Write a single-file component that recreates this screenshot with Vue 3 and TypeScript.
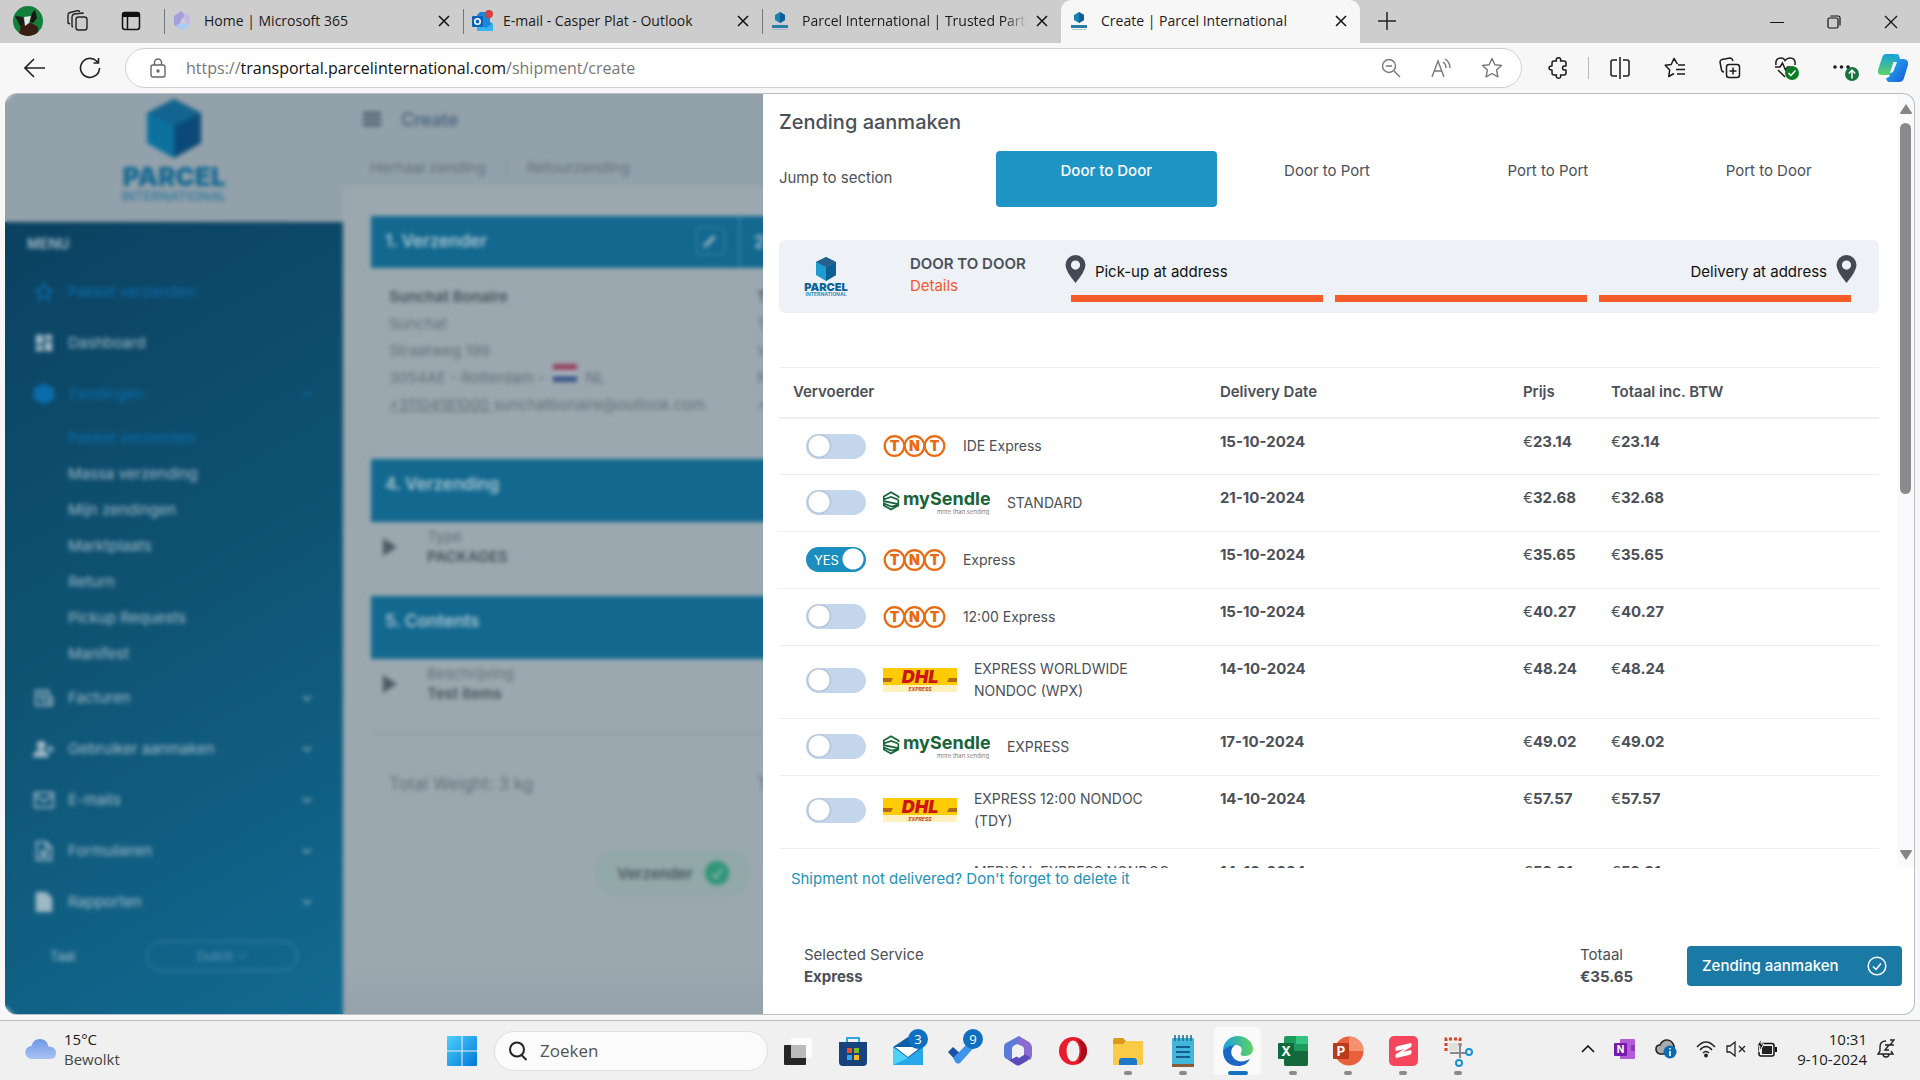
<script setup lang="ts">
import { ref } from 'vue'

interface MenuItem {
  label: string
  icon: string
  active?: boolean
  chevron?: boolean
  children?: { label: string; active?: boolean }[]
}

interface Service {
  id: number
  carrier: 'tnt' | 'sendle' | 'dhl'
  name: string
  date: string
  price: string
  total: string
}

const icons: Record<string, string> = {
  star: 'M12 3l2.7 5.8 6.3.8-4.6 4.3 1.2 6.2L12 17l-5.6 3.1 1.2-6.2L3 9.6l6.3-.8z',
  grid: 'M3 3h8v10H3zM13 3h8v6h-8zM3 15h8v6H3zM13 11h8v10h-8z',
  box: 'M12 2l10 4v11l-10 5L2 17V6z',
  invoice: 'M3 4h14v16H3zM17 11h4v9h-4M6 8h8M6 12h8M9 16h5',
  userAdd: 'M9 4a4 4 0 1 1 0 8a4 4 0 0 1 0-8zM1 20c0-8 15-8 15 0zM19 8v8M15 12h8',
  mail: 'M2 4h20v16H2zM2 6l10 8 10-8',
  doc: 'M4 2h10l6 6v14H4zM14 2v6h6M8 12h8M8 15h8M8 18h8',
  report: 'M4 2h10l6 6v14H4z',
}
const solid = ['grid', 'box', 'userAdd', 'report']

const menu: MenuItem[] = [
  { label: 'Pakket verzenden', icon: 'star', active: true },
  { label: 'Dashboard', icon: 'grid' },
  {
    label: 'Zendingen',
    icon: 'box',
    active: true,
    chevron: true,
    children: [
      { label: 'Pakket verzenden', active: true },
      { label: 'Massa verzending' },
      { label: 'Mijn zendingen' },
      { label: 'Marktplaats' },
      { label: 'Return' },
      { label: 'Pickup Requests' },
      { label: 'Manifest' },
    ],
  },
  { label: 'Facturen', icon: 'invoice', chevron: true },
  { label: 'Gebruiker aanmaken', icon: 'userAdd', chevron: true },
  { label: 'E-mails', icon: 'mail', chevron: true },
  { label: 'Formulieren', icon: 'doc', chevron: true },
  { label: 'Rapporten', icon: 'report', chevron: true },
]

const sections = ['Door to Door', 'Door to Port', 'Port to Port', 'Port to Door']
const section = ref('Door to Door')

const services: Service[] = [
  { id: 1, carrier: 'tnt', name: 'IDE Express', date: '15-10-2024', price: '23.14', total: '23.14' },
  { id: 2, carrier: 'sendle', name: 'STANDARD', date: '21-10-2024', price: '32.68', total: '32.68' },
  { id: 3, carrier: 'tnt', name: 'Express', date: '15-10-2024', price: '35.65', total: '35.65' },
  { id: 4, carrier: 'tnt', name: '12:00 Express', date: '15-10-2024', price: '40.27', total: '40.27' },
  { id: 5, carrier: 'dhl', name: 'EXPRESS WORLDWIDE NONDOC (WPX)', date: '14-10-2024', price: '48.24', total: '48.24' },
  { id: 6, carrier: 'sendle', name: 'EXPRESS', date: '17-10-2024', price: '49.02', total: '49.02' },
  { id: 7, carrier: 'dhl', name: 'EXPRESS 12:00 NONDOC (TDY)', date: '14-10-2024', price: '57.57', total: '57.57' },
  { id: 8, carrier: 'dhl', name: 'MEDICAL EXPRESS NONDOC', date: '14-10-2024', price: '59.91', total: '59.91' },
]
const selected = ref(3)
</script>

<template>
  <div class="desktop">
    <header class="tabstrip">
      <div class="strip-tools">
        <button class="plain" aria-label="Profile">
          <svg width="30" height="30" viewBox="0 0 30 30"><defs><clipPath id="av"><circle cx="15" cy="15" r="15" /></clipPath></defs><g clip-path="url(#av)"><rect width="30" height="30" fill="#12803a" /><path d="M8 18l10-1 7 4v9H6z" fill="#3b1c12" /><path d="M2 10l8 1 2 7-5 2z" fill="#1b1b18" /><path d="M11 11l7-1-2 7-4 3z" fill="#e5e6e1" /><path d="M19 7l3-3 2 8-4 5-3-1z" fill="#181512" /></g></svg>
        </button>
        <button class="plain" aria-label="Workspaces">
          <svg width="22" height="22" viewBox="0 0 22 22" fill="none" stroke="#222" stroke-width="1.4" stroke-linejoin="round"><rect x="9" y="7" width="11" height="13" rx="2.500" /><path d="M6 17l-1-.5V7q0-2 2-3l9-1v1M3 14l-2-1 0-8q0-2 2-2.500l8-2 2 1" /></svg>
        </button>
        <button class="plain" aria-label="Tab actions">
          <svg width="20" height="20" viewBox="0 0 20 20"><rect x="1.500" y="1.500" width="17" height="17" rx="2.500" fill="none" stroke="#111" stroke-width="1.500" /><path d="M1 3.500q0-2.500 2.500-2.500h13q2.500 0 2.500 2.500V6H1z" fill="#111" /><path d="M6.500 6v12" stroke="#111" stroke-width="1.500" /></svg>
        </button>
      </div>
      <div class="tab">
        <svg width="18" height="20" viewBox="0 0 18 20"><path d="M8 0L1 5v9l5 3 2-8 5-5z" fill="#a3a0dc" /><path d="M10 1l7 4v9l-5-2V7z" fill="#c8b8ea" /><path d="M3 14l6-2 8 2-8 6z" fill="#a8cdf2" /></svg>
        <span class="tab-title">Home | Microsoft 365</span>
        <button class="plain x" aria-label="Close tab"><svg width="12" height="12" viewBox="0 0 12 12"><path d="M1 1l10 10M11 1L1 11" stroke="#111" stroke-width="1.500" /></svg></button>
      </div>
      <div class="tab">
        <svg class="wide-ico" width="22" height="22" viewBox="0 0 22 22"><path d="M8 2h10v10l3 2v7H5V5z" fill="#1c87d8" /><path d="M5 13l9 5 7-5v8H5z" fill="#35b5f0" /><rect x="0" y="6" width="11" height="11" rx="1" fill="#0a62b8" /><circle cx="5.500" cy="11.500" r="2.700" fill="none" stroke="#fff" stroke-width="1.600" /><circle cx="17" cy="4" r="4" fill="#d83f3f" /></svg>
        <span class="tab-title">E-mail - Casper Plat - Outlook</span>
        <button class="plain x" aria-label="Close tab"><svg width="12" height="12" viewBox="0 0 12 12"><path d="M1 1l10 10M11 1L1 11" stroke="#111" stroke-width="1.500" /></svg></button>
      </div>
      <div class="tab">
        <svg width="18" height="20" viewBox="0 0 18 20"><path d="M9 1l5 3v5l-5 3-5-3V4z" fill="#1583b3" /><path d="M9 1l5 3v5l-5 3z" fill="#0b5f93" /><rect x="1" y="14" width="16" height="3" fill="#2a7ea6" /><rect x="2" y="18" width="14" height="1" fill="#9fb9c6" /></svg>
        <span class="tab-title fade">Parcel International | Trusted Partner</span>
        <button class="plain x" aria-label="Close tab"><svg width="12" height="12" viewBox="0 0 12 12"><path d="M1 1l10 10M11 1L1 11" stroke="#111" stroke-width="1.500" /></svg></button>
      </div>
      <div class="tab current">
        <svg width="18" height="20" viewBox="0 0 18 20"><path d="M9 1l5 3v5l-5 3-5-3V4z" fill="#1583b3" /><path d="M9 1l5 3v5l-5 3z" fill="#0b5f93" /><rect x="1" y="14" width="16" height="3" fill="#2a7ea6" /><rect x="2" y="18" width="14" height="1" fill="#b5cbd6" /></svg>
        <span class="tab-title">Create | Parcel International</span>
        <button class="plain x" aria-label="Close tab"><svg width="12" height="12" viewBox="0 0 12 12"><path d="M1 1l10 10M11 1L1 11" stroke="#111" stroke-width="1.500" /></svg></button>
      </div>
      <button class="plain new-tab" aria-label="New tab"><svg width="18" height="18" viewBox="0 0 18 18"><path d="M9 0v18M0 9h18" stroke="#222" stroke-width="1.500" /></svg></button>
      <div class="win-controls">
        <button class="plain" aria-label="Minimize"><svg width="14" height="14" viewBox="0 0 14 14"><path d="M0 7.500h14" stroke="#111" /></svg></button>
        <button class="plain" aria-label="Restore"><svg width="14" height="14" viewBox="0 0 14 14" fill="none" stroke="#111" stroke-width="1.200"><rect x="1" y="3" width="10" height="10" rx="1.500" /><path d="M3.500 1h7.500q2 0 2 2v7.500" /></svg></button>
        <button class="plain" aria-label="Close"><svg width="14" height="14" viewBox="0 0 14 14"><path d="M1 1l12 12M13 1L1 13" stroke="#111" stroke-width="1.200" /></svg></button>
      </div>
    </header>

    <nav class="toolbar">
      <button class="plain back" aria-label="Back"><svg width="22" height="20" viewBox="0 0 22 20" fill="none" stroke="#222" stroke-width="1.600"><path d="M21 10H2M10 1l-9 9 9 9" /></svg></button>
      <button class="plain reload" aria-label="Reload"><svg width="22" height="22" viewBox="0 0 22 22" fill="none" stroke="#222" stroke-width="1.600"><path d="M20.500 11a9.500 9.500 0 1 1-3-7L19 5.500M19.500 1v5h-5" /></svg></button>
      <div class="address">
        <svg width="16" height="20" viewBox="0 0 16 20" fill="none" stroke="#666" stroke-width="1.400"><rect x="1" y="7" width="14" height="12" rx="2" /><path d="M4.500 7V4.500a3.500 3.500 0 0 1 7 0V7" /><circle cx="8" cy="13" r="1" fill="#666" /></svg>
        <span class="url">https://<b>transportal.parcelinternational.com</b>/shipment/create</span>
        <button class="plain" aria-label="Zoom"><svg width="20" height="20" viewBox="0 0 20 20" fill="none" stroke="#777" stroke-width="1.400"><circle cx="8" cy="8" r="6.500" /><path d="M13 13l6 6M5 8h6" /></svg></button>
        <button class="plain" aria-label="Read aloud"><svg width="20" height="20" viewBox="0 0 20 20" fill="none" stroke="#777" stroke-width="1.400"><path d="M1 19L7 3l6 16M3 13h8M12 4q3 2 3 6M14 1q5 3 5 9" /></svg></button>
        <button class="plain" aria-label="Favorite"><svg width="22" height="22" viewBox="0 0 22 22" fill="none" stroke="#777" stroke-width="1.400" stroke-linejoin="round"><path d="M11 1.500l2.900 6.200 6.600.8-4.900 4.600 1.300 6.700L11 16.500l-5.900 3.300 1.300-6.700L1.500 8.500l6.600-.8z" /></svg></button>
      </div>
      <div class="ext">
        <button class="plain" aria-label="Extensions"><svg width="20" height="22" viewBox="0 0 20 22" fill="none" stroke="#1b1b1b" stroke-width="1.500" stroke-linejoin="round"><path d="M6 4h2.500Q7.500.8 10.500.8T12.500 4H16q2 0 2 2v3q-3.500-.5-3.500 2t3.500 2v3q0 2-2 2h-3.500q1 3.200-2 3.200T8.500 18H6q-2 0-2-2v-3Q1 13 1 11t3-2V6q0-2 2-2z" /></svg></button>
        <i class="bar"></i>
        <button class="plain" aria-label="Split screen"><svg width="22" height="22" viewBox="0 0 22 22" fill="none" stroke="#1b1b1b" stroke-width="1.500"><path d="M8 3H4Q2 3 2 5v12q0 2 2 2h4M14 3h4q2 0 2 2v12q0 2-2 2h-4M11 0v22" /></svg></button>
        <button class="plain" aria-label="Favorites"><svg width="22" height="22" viewBox="0 0 22 22" fill="none" stroke="#1b1b1b" stroke-width="1.500" stroke-linejoin="round"><path d="M13.500 7.200L10 1.500 7.200 7.500l-6 .8L5.700 13l-1 6.500L10 16.500M14 8h7M12 12.500h9M13 17h8" /></svg></button>
        <button class="plain" aria-label="Collections"><svg width="22" height="22" viewBox="0 0 22 22" fill="none" stroke="#1b1b1b" stroke-width="1.500"><rect x="7.500" y="7.500" width="13" height="13" rx="2.500" /><path d="M14 10.500v7M10.500 14h7M5 15q-2 0-2.500-2L1 5q0-2 2-2.500L11 1q2 0 3 3" /></svg></button>
        <button class="plain" aria-label="Browser essentials"><svg width="26" height="24" viewBox="0 0 26 24" fill="none" stroke="#1b1b1b" stroke-width="1.500"><path d="M2 9Q1 2 7 2q3 0 4 2.500Q13 2 16 2q6 0 5 7M1 11h5l2.500-4 3 7 2-3h3M4 14l7 7" /><circle cx="18" cy="17" r="7" fill="#0f7a24" stroke="none" /><path d="M14.500 17l2.500 2.500 4.500-5" stroke="#fff" /></svg></button>
        <button class="plain" aria-label="More"><svg width="26" height="26" viewBox="0 0 26 26"><g fill="#1b1b1b"><circle cx="2" cy="12" r="1.800" /><circle cx="8.500" cy="12" r="1.800" /><circle cx="15" cy="12" r="1.800" /></g><circle cx="19" cy="19" r="7" fill="#17733b" /><path d="M19 23.500v-8M15.800 18.500L19 15l3.200 3.500" stroke="#fff" stroke-width="1.500" fill="none" /></svg></button>
        <button class="plain copilot" aria-label="Copilot"><svg width="30" height="30" viewBox="0 0 30 30"><defs><linearGradient id="cp1" x1="0" y1="0" x2="0" y2="1"><stop offset="0" stop-color="#14a0d8" /><stop offset="1" stop-color="#5ed36b" /></linearGradient><linearGradient id="cp2" x1="0" y1="0" x2="1" y2="1"><stop offset="0" stop-color="#2bc6f2" /><stop offset="1" stop-color="#1552d8" /></linearGradient></defs><path d="M8 1h10q3 0 3 4l-5 14q-1 3-4 3H4q-5 0-4-5L4 5q1-4 4-4z" fill="url(#cp1)" /><path d="M15 1h4q2 0 3 5h4q5 1 4 6l-4 13q-1 4-5 4H11q-2 0-3-4 3 0 4-3l4-13q1-3 4-3z" fill="url(#cp2)" /><path d="M12 20l3.500-11H19l-3.500 9q-1 2-3.500 2z" fill="#fff" /></svg></button>
      </div>
    </nav>

    <div class="viewport">
      <div class="frame">
        <div class="portal">
          <aside class="sidebar">
            <div class="brand">
              <svg width="110" height="108" viewBox="0 0 110 108"><path d="M55 1l27 14v30L55 60 28 45V15z" fill="#0d6e9c" /><path d="M55 1l27 14v30L55 60z" fill="#0b4a78" /><path d="M55 1l27 14-27 13-27-13z" fill="#13648f" /><path d="M55 28v32L28 45V15z" fill="#0b719f" /><text x="55" y="88" text-anchor="middle" font-family="Inter, sans-serif" font-weight="900" font-size="26" fill="#176a92">PARCEL</text><text x="55" y="103" text-anchor="middle" font-family="Inter, sans-serif" font-weight="600" font-size="13" fill="#3c7f9f">INTERNATIONAL</text></svg>
            </div>
            <div class="menu">
              <div class="menu-title">MENU</div>
              <template v-for="item in menu" :key="item.label">
                <a href="#" class="menu-item" :class="{ active: item.active }">
                  <svg width="22" height="22" viewBox="0 0 24 24" stroke="currentColor" :fill="solid.includes(item.icon) ? 'currentColor' : 'none'"><path :d="icons[item.icon]" :stroke-width="item.icon === 'grid' ? 0 : 2" /></svg>
                  <span>{{ item.label }}</span>
                  <svg v-if="item.chevron" class="chev" width="10" height="6" viewBox="0 0 10 6" fill="none" stroke="currentColor" stroke-width="1.400"><path :d="item.children ? 'M1 5l4-4 4 4' : 'M1 1l4 4 4-4'" /></svg>
                </a>
                <div v-if="item.children" class="submenu">
                  <a v-for="child in item.children" :key="child.label" href="#" :class="{ active: child.active }">{{ child.label }}</a>
                </div>
              </template>
              <div class="lang">
                <label for="lang">Taal</label>
                <div class="lang-box">
                  <select id="lang"><option>Dutch</option></select>
                  <svg width="8" height="5" viewBox="0 0 8 5" fill="none" stroke="#5d96b4"><path d="M0 0l4 4 4-4" /></svg>
                </div>
              </div>
            </div>
          </aside>
          <main class="content">
            <div class="topbar">
              <div class="crumb">
                <svg width="18" height="14" viewBox="0 0 18 14"><path d="M0 1.500h18M0 7h18M0 12.500h18" stroke="#3b4957" stroke-width="2.600" /></svg>
                <h1>Create</h1>
              </div>
              <div class="links"><a href="#">Herhaal zending</a><i></i><a href="#">Retourzending</a></div>
            </div>
            <section class="card">
              <div class="cols head">
                <h2>1. Verzender <button class="edit" aria-label="Edit"><svg width="16" height="16" viewBox="0 0 16 16"><path d="M1 15l1-4 9-9 3 3-9 9z" fill="#86a9ba" /></svg></button></h2>
                <h2>2</h2>
              </div>
              <div class="cols addr">
                <address>
                  <b>Sunchat Bonaire</b>
                  <span>Sunchat</span>
                  <span>Straatweg 199</span>
                  <span class="city">3054AE - Rotterdam - <svg width="24" height="18" viewBox="0 0 24 18"><rect width="24" height="6" fill="#95405c" /><rect y="6" width="24" height="6" fill="#aab6bf" /><rect y="12" width="24" height="6" fill="#3a5588" /></svg> NL</span>
                  <span><a href="#">+31104181000 </a>sunchatbonaire@outlook.com</span>
                </address>
                <address><b>T</b><span>T</span><span>V</span><span>N</span><span>+</span></address>
              </div>
            </section>
            <section class="card">
              <div class="head tall"><h2>4. Verzending</h2></div>
              <div class="fold"><svg width="14" height="18" viewBox="0 0 14 18"><path d="M0 0l14 9-14 9z" fill="#4f5b64" /></svg><p>Type<b>PACKAGES</b></p></div>
            </section>
            <section class="card">
              <div class="head tall"><h2>5. Contents</h2></div>
              <div class="fold"><svg width="14" height="18" viewBox="0 0 14 18"><path d="M0 0l14 9-14 9z" fill="#4f5b64" /></svg><p>Beschrijving<b>Test items</b></p></div>
            </section>
            <div class="totals cols"><span>Total Weight: 3 kg</span><span>T</span></div>
            <div class="step"><b>Verzender</b><svg width="24" height="24" viewBox="0 0 24 24"><circle cx="12" cy="12" r="12" fill="#2f9576" /><path d="M7 13l4 4 6-10" stroke="#8fb9ae" stroke-width="2" fill="none" /></svg></div>
          </main>
        </div>
        <div class="veil"></div>

        <div class="panel" role="dialog" aria-label="Zending aanmaken">
          <div class="panel-main">
            <div class="scroller">
              <h3>Zending aanmaken</h3>
              <div class="jump">
                <span>Jump to section</span>
                <button v-for="s in sections" :key="s" :class="{ on: s === section }" @click="section = s">{{ s }}</button>
              </div>
              <div class="banner">
                <svg class="banner-logo" width="46" height="40" viewBox="0 0 46 40"><path d="M23 0l10 5v13l-10 6-10-6V5z" fill="#1e9bcf" /><path d="M23 10l10-5v13l-10 6z" fill="#0c5f95" /><path d="M23 0l10 5-10 5-10-5z" fill="#27608f" /><text x="23" y="34" text-anchor="middle" font-family="Inter, sans-serif" font-weight="900" font-size="11" fill="#0c659b">PARCEL</text><text x="23" y="39" text-anchor="middle" font-family="Inter, sans-serif" font-weight="700" font-size="5" fill="#2d8fbd">INTERNATIONAL</text></svg>
                <p class="kind"><b>DOOR TO DOOR</b><a href="#">Details</a></p>
                <div class="route">
                  <div class="ends">
                    <svg width="21" height="28" viewBox="0 0 21 28"><path d="M10.500 0A10 10 0 0 0 .5 10q0 6 10 18 10-12 10-18a10 10 0 0 0-10-10zm0 5.500a4.600 4.600 0 1 1 0 9.200a4.600 4.600 0 0 1 0-9.200z" fill="#434a54" /></svg>
                    <span>Pick-up at address</span>
                    <span class="to">Delivery at address</span>
                    <svg width="21" height="28" viewBox="0 0 21 28"><path d="M10.500 0A10 10 0 0 0 .5 10q0 6 10 18 10-12 10-18a10 10 0 0 0-10-10zm0 5.500a4.600 4.600 0 1 1 0 9.200a4.600 4.600 0 0 1 0-9.200z" fill="#434a54" /></svg>
                  </div>
                  <div class="bars"><i></i><i></i><i></i></div>
                </div>
              </div>
              <table>
                <colgroup><col class="c1" /><col class="c2" /><col class="c3" /><col /></colgroup>
                <thead><tr><th>Vervoerder</th><th>Delivery Date</th><th>Prijs</th><th>Totaal inc. BTW</th></tr></thead>
                <tbody>
                  <tr v-for="s in services" :key="s.id">
                    <td>
                      <div class="svc" :class="s.carrier">
                        <label class="switch">
                          <input type="checkbox" :checked="s.id === selected" :aria-label="s.name" @change="selected = s.id" />
                          <span v-if="s.id === selected">YES</span>
                        </label>
                        <svg v-if="s.carrier === 'tnt'" width="63" height="22" viewBox="0 0 63 22"><g fill="#fff" stroke="#ea6a10" stroke-width="2.200"><circle cx="11.500" cy="11" r="9.800" /><circle cx="51.500" cy="11" r="9.800" /><circle cx="31.500" cy="11" r="9.800" /></g><g font-family="Inter, sans-serif" font-weight="900" font-size="14" fill="#ea6a10" text-anchor="middle"><text x="11.500" y="16">T</text><text x="31.500" y="16">N</text><text x="51.500" y="16">T</text></g></svg>
                        <svg v-else-if="s.carrier === 'sendle'" width="107" height="24" viewBox="0 0 107 24"><path d="M15.500 7V5.500L8 1.200.8 5.500v4.700l14.500 3M.8 8.500L8 6l7.500 2.800M15.300 9v5.500L8 18.500.8 14.500V12.500l7.700 3 6.500-1.500" fill="none" stroke="#17633a" stroke-width="1.700" /><text x="20" y="14" font-family="Inter, sans-serif" font-weight="700" font-size="18" fill="#17633a">mySendle</text><text x="54" y="23" font-family="Inter, sans-serif" font-weight="300" font-size="6" fill="#555">more than sending</text></svg>
                        <svg v-else width="74" height="24" viewBox="0 0 74 24"><rect width="74" height="17" fill="#fecb05" /><path d="M0 10h10l-2 4H0zM66 10h8v4H64z" fill="#b36a12" /><rect y="17" width="74" height="7" fill="#fff0c0" /><text x="37" y="15" text-anchor="middle" font-family="Inter, sans-serif" font-weight="900" font-style="italic" font-size="18" fill="#cf1414">DHL</text><text x="37" y="23" text-anchor="middle" font-family="Inter, sans-serif" font-weight="700" font-style="italic" font-size="5" fill="#b8432c">EXPRESS</text></svg>
                        <span class="name">{{ s.name }}</span>
                      </div>
                    </td>
                    <td><b>{{ s.date }}</b></td>
                    <td>€<b>{{ s.price }}</b></td>
                    <td>€<b>{{ s.total }}</b></td>
                  </tr>
                </tbody>
              </table>
            </div>
            <div class="scrollbar">
              <svg width="12" height="10" viewBox="0 0 12 10"><path d="M6 0l6 9q0 1-1 1H1q-1 0-1-1z" fill="#868686" /></svg>
              <div class="track"><div class="thumb"></div></div>
              <svg width="12" height="10" viewBox="0 0 12 10"><path d="M6 10l6-9q0-1-1-1H1Q0 0 0 1z" fill="#868686" /></svg>
            </div>
          </div>
          <footer class="panel-foot">
            <a href="#" class="note">Shipment not delivered? Don't forget to delete it</a>
            <div class="summary">
              <p>Selected Service<b>Express</b></p>
              <p class="sum">Totaal<b>€35.65</b></p>
              <button class="submit">Zending aanmaken<svg width="20" height="20" viewBox="0 0 20 20" fill="none" stroke="#fff" stroke-width="1.500"><circle cx="10" cy="10" r="8.800" /><path d="M6 10.500l3 3 5-6" /></svg></button>
            </div>
          </footer>
        </div>
      </div>
    </div>

    <footer class="taskbar">
      <div class="weather">
        <svg width="31" height="20" viewBox="0 0 31 20"><defs><linearGradient id="cl" x1="0" y1="0" x2="0" y2="1"><stop offset="0" stop-color="#6d97e4" /><stop offset="1" stop-color="#a9c2f2" /></linearGradient></defs><path d="M7 20a6.500 6.500 0 0 1-.5-13Q8 0 15 0t8.500 7.500Q31 8 31 14q0 6-6 6z" fill="url(#cl)" /></svg>
        <p>15°C<span>Bewolkt</span></p>
      </div>
      <div class="dock">
        <button class="plain start" aria-label="Start"><svg width="30" height="30" viewBox="0 0 30 30"><defs><linearGradient id="wn" x1="0" y1="0" x2="1" y2="1"><stop offset="0" stop-color="#4fd0fb" /><stop offset="1" stop-color="#0078d8" /></linearGradient></defs><path d="M1 0h13.500v14.500H0V1q0-1 1-1zM15.500 0H29q1 0 1 1v13.500H15.500zM0 15.500h14.500V30H1q-1 0-1-1zM15.500 15.500H30V29q0 1-1 1H15.500z" fill="url(#wn)" /></svg></button>
        <label class="search"><svg width="20" height="20" viewBox="0 0 20 20" fill="none" stroke="#222" stroke-width="2"><circle cx="9" cy="8.500" r="7" /><path d="M13.500 14l5 5" /></svg><input type="text" placeholder="Zoeken" aria-label="Zoeken" /></label>
        <button class="app" aria-label="Task view"><svg width="32" height="32" viewBox="0 0 32 32"><rect x="2" y="10" width="22" height="20" rx="1" fill="#262626" /><path d="M9 3h21v20H9z" fill="#fff" opacity=".8" /><path d="M9 10h15v13H9z" fill="#bbb" /></svg></button>
        <button class="app" aria-label="Store"><svg width="32" height="32" viewBox="0 0 32 32"><path d="M10 8V3h12v5" fill="none" stroke="#2aa9e6" stroke-width="2" /><path d="M2 7h28v20q0 4-4 4H6q-4 0-4-4z" fill="#17427c" /><path d="M10 13h5v5h-5z" fill="#e9512a" /><path d="M17 13h5v5h-5z" fill="#7cba2c" /><path d="M10 20h5v5h-5z" fill="#2ea8ea" /><path d="M17 20h5v5h-5z" fill="#f8bb1c" /></svg></button>
        <button class="app" aria-label="Mail"><svg width="32" height="32" viewBox="0 0 32 32"><path d="M1 12L16 2l15 10v18H1z" fill="#0d5fa8" /><path d="M3 12h26l-13 10z" fill="#fff" /><path d="M1 12l15 11 15-11v17q0 1-1 1H2q-1 0-1-1z" fill="#28a8ea" /><path d="M1 12l15 11-15 7z" fill="#4fd0f5" /></svg><em>3</em></button>
        <button class="app" aria-label="To Do"><svg width="32" height="32" viewBox="0 0 32 32"><path d="M1 17l5-5 10 9-5 7z" fill="#1b51a6" /><path d="M6 23L26 3l5 5-18 20q-2 1-4 0z" fill="#3d94ea" /></svg><em>9</em></button>
        <button class="app" aria-label="Microsoft 365"><svg width="32" height="32" viewBox="0 0 32 32"><path d="M17 1L4 8q-2 1-2 4v8q0 3 3 4l5 1V14q0-3 3-4l6-3z" fill="#5b79d8" /><path d="M17 1l10 6q3 2 3 5v8q0 3-2 5l-6-4v-7q0-2-2-3l-5-2z" fill="#8a6bd0" /><path d="M5 24q4 1 7-1l8-5 8 4q0 2-3 4l-7 4q-2 1-4 0z" fill="#5a4bb8" /><path d="M12 14l5-3 5 3v6l-5 3-5-3z" fill="#f0f0f0" /></svg></button>
        <button class="app" aria-label="Opera"><svg width="32" height="32" viewBox="0 0 32 32"><circle cx="16" cy="16" r="14" fill="#e81c2e" /><path d="M20 4q10 3 10 12T20 28q4-4 4-12T20 4z" fill="#a80d1c" /><ellipse cx="16" cy="16" rx="6.500" ry="10.500" fill="#f0f0f0" /></svg></button>
        <button class="app run" aria-label="Explorer"><svg width="32" height="32" viewBox="0 0 32 32"><path d="M1 5q0-2 2-2h8l3 3h15q2 0 2 2v8H1z" fill="#d99a1c" /><path d="M1 10q0-1 1-1h9l3-3h15q2 0 2 2v20q0 2-2 2H1z" fill="#fccb45" /><path d="M7 30v-4q0-3 3-3h12q3 0 3 3v4z" fill="#1d78c8" /></svg></button>
        <button class="app run" aria-label="Notepad"><svg width="32" height="32" viewBox="0 0 32 32"><rect x="5" y="3" width="22" height="26" rx="1" fill="#42b6da" /><path d="M8 0v6M12 0v6M16 0v6M20 0v6M24 0v6" stroke="#1c6a8c" stroke-width="1.500" /><path d="M9 12h14M9 17h14M9 22h14" stroke="#155d86" stroke-width="2" /><path d="M5 29h22v3H5z" fill="#865c3a" /></svg></button>
        <button class="app run here" aria-label="Edge"><svg width="32" height="32" viewBox="0 0 32 32"><defs><linearGradient id="eg" x1="0" y1="0" x2="1" y2="0"><stop offset="0" stop-color="#1a9fe0" /><stop offset="1" stop-color="#5fd35e" /></linearGradient></defs><path d="M1 16C1 7 8 1 16 1s15 6 15 13c0 4-3 7-8 7-4 0-5-1-4-3 2-4 0-8-5-8-6 0-11 4-13 6z" fill="url(#eg)" /><path d="M1 16c2-3 7-6 12-6-4 3-5 8-2 12 3 5 10 6 17 2-3 5-7 7-12 7C7 31 1 25 1 16z" fill="#1a67c4" /></svg></button>
        <button class="app run" aria-label="Excel"><svg width="32" height="32" viewBox="0 0 32 32"><rect x="7" y="1" width="24" height="30" rx="2" fill="#1e9b5b" /><path d="M19 1h10q2 0 2 2v6H19z" fill="#33c481" /><path d="M7 16h24v13q0 2-2 2H9q-2 0-2-2z" fill="#14683c" /><rect x="1" y="8" width="16" height="16" rx="1" fill="#0e6b3b" /><text x="9" y="21" text-anchor="middle" font-family="Inter, sans-serif" font-size="13" font-weight="700" fill="#fff">X</text></svg></button>
        <button class="app run" aria-label="PowerPoint"><svg width="32" height="32" viewBox="0 0 32 32"><circle cx="17" cy="16" r="14.500" fill="#e8603c" /><path d="M17 1.500A14.500 14.500 0 0 1 31.500 16H17z" fill="#f79070" /><rect x="1" y="8" width="16" height="16" rx="1" fill="#b93a1c" /><text x="9" y="21" text-anchor="middle" font-family="Inter, sans-serif" font-size="13" font-weight="700" fill="#fff">P</text></svg></button>
        <button class="app run" aria-label="Expenses"><svg width="32" height="32" viewBox="0 0 32 32"><rect x="2" y="1" width="29" height="30" rx="5" fill="#f4465c" /><path d="M9 16q-2-4 2-5l13-3q2 4-2 5zM9 23q-2-4 2-5l13-3q2 4-2 5z" fill="#fff" /><path d="M22 12l-11 7" stroke="#fff" stroke-width="2" /></svg></button>
        <button class="app run" aria-label="Snipping tool"><svg width="32" height="32" viewBox="0 0 32 32" fill="none"><path d="M4 16V4h14v8" stroke="#d8451e" stroke-width="3" stroke-dasharray="3 2" /><path d="M7 8h9v8H7z" fill="#e0e0e0" /><path d="M18 8v15M8 18h16" stroke="#888" stroke-width="2" /><circle cx="17" cy="28" r="3" stroke="#1c8fd4" stroke-width="2" /><circle cx="27" cy="17" r="3" stroke="#1c8fd4" stroke-width="2" /></svg></button>
      </div>
      <div class="tray">
        <svg width="14" height="8" viewBox="0 0 14 8" fill="none" stroke="#111" stroke-width="1.600"><path d="M1 7l6-6 6 6" /></svg>
        <svg width="22" height="20" viewBox="0 0 22 20"><rect x="6" y="0" width="15" height="20" rx="1" fill="#b35cd8" /><path d="M17 6h4v6h-4z" fill="#8a3bbd" /><rect x="0" y="4" width="13" height="13" rx="1" fill="#7719aa" /><text x="6.500" y="14" text-anchor="middle" font-family="Inter, sans-serif" font-size="10" font-weight="700" fill="#fff">N</text></svg>
        <svg width="22" height="20" viewBox="0 0 22 20"><path d="M5 15q-4-1-4-5t4-4q2-5 7-5t7 6v8z" fill="#aaa" stroke="#222" stroke-width="1.600" /><circle cx="15" cy="13" r="6.500" fill="#0b6bb5" /><path d="M15 9v1.500M15 12v5" stroke="#fff" stroke-width="1.600" /></svg>
        <div class="net">
          <svg width="20" height="18" viewBox="0 0 20 18" fill="none" stroke="#222" stroke-width="1.500"><path d="M1 7q9-10 18 0M4 10q6-7 12 0M7 13q3-3 6 0" /><circle cx="10" cy="15.500" r="1.200" fill="#222" /></svg>
          <svg width="20" height="18" viewBox="0 0 20 18" fill="none" stroke="#222" stroke-width="1.300"><path d="M1 6h3l5-4v14l-5-4H1zM13 6l6 6M19 6l-6 6" /></svg>
          <svg width="22" height="20" viewBox="0 0 22 20"><rect x="3" y="4.500" width="15" height="12.500" rx="2" fill="#f0f0f0" stroke="#111" stroke-width="1.500" /><rect x="6" y="7" width="10" height="8" fill="#222" /><path d="M19 8h2v5h-2z" fill="#111" /><path d="M5 0L1 7h3l-1 6 5-8H5z" fill="#111" stroke="#f0f0f0" /></svg>
        </div>
        <p class="clock">10:31<span>9-10-2024</span></p>
        <svg width="18" height="20" viewBox="0 0 18 20" fill="none" stroke="#222" stroke-width="1.400"><path d="M9 2Q3 2 3 8v4l-2 3h15l-2-3M6 15q0 3 3 3t3-3M8 6h4l-4 5h4M13 1h4l-4 5h4" /></svg>
      </div>
    </footer>
  </div>
</template>

<style>
html,
body {
  margin: 0;
  overflow: hidden;
}
</style>

<style scoped>
* {
  box-sizing: border-box;
}
.desktop {
  height: 100vh;
  display: flex;
  flex-direction: column;
  background: #f7f7f7;
  font-family: 'Open Sans', 'Noto Sans', sans-serif;
  font-size: 15px;
  color: #1b1b1b;
}
svg {
  display: block;
  flex: none;
}
p,
h1,
h2,
h3 {
  margin: 0;
}
button {
  font: inherit;
  cursor: pointer;
}
a {
  color: inherit;
  text-decoration: none;
}
.plain {
  border: 0;
  padding: 0;
  background: none;
}

/* Tab strip */
.tabstrip {
  height: 43px;
  flex: none;
  display: flex;
  background: #cdcdcd;
}
.strip-tools {
  width: 164px;
  flex: none;
  display: flex;
  align-items: center;
  gap: 24px;
  padding: 0 0 2px 13px;
}
.strip-tools button:last-child {
  margin-left: 8px;
}
.tab {
  flex: 0 1 299px;
  min-width: 0;
  display: flex;
  align-items: center;
  gap: 13px;
  padding: 0 13px 2px 9px;
  background: linear-gradient(#777, #777) 0 9px / 1px 25px no-repeat;
  font-size: 14px;
  white-space: nowrap;
}
.wide-ico {
  margin-right: -4px;
}
.tab-title {
  flex: 1;
  min-width: 0;
  overflow: hidden;
}
.fade {
  margin-right: -4px;
  mask-image: linear-gradient(to right, #000 90%, transparent);
}
.tab.current {
  background: #f7f7f7;
  border-radius: 10px 10px 0 0;
}
.new-tab {
  padding: 0 18px 2px;
}
.win-controls {
  margin-left: auto;
  display: flex;
  align-items: center;
  gap: 43px;
  padding-right: 22px;
}

/* Address bar */
.toolbar {
  height: 50px;
  flex: none;
  display: flex;
  align-items: center;
  padding: 0 12px 0 24px;
}
.reload {
  margin: 0 24px 0 33px;
}
.address {
  flex: 1;
  height: 40px;
  display: flex;
  align-items: center;
  gap: 30px;
  padding: 0 18px 0 24px;
  background: #fff;
  border: 1px solid #cfcfcf;
  border-radius: 20px;
}
.url {
  flex: 1;
  margin-left: -10px;
  font-size: 16px;
  color: #777;
}
.url b {
  font-weight: 400;
  color: #111;
}
.ext {
  display: flex;
  align-items: center;
  gap: 33px;
  margin-left: 26px;
}
.ext .bar {
  width: 1px;
  height: 22px;
  margin: 0 -13px;
  background: #bbb;
}
.copilot {
  margin-left: -14px;
}

/* Page frame */
.viewport {
  flex: 1;
  min-height: 0;
  padding: 0 5px 5px;
  border-bottom: 1px solid #bdbdbd;
}
.frame {
  position: relative;
  height: 100%;
  overflow: hidden;
  border-radius: 12px;
  border: 1px solid #b8bfc6;
  border-width: 1px 1px 1px 0;
  font-family: Inter, 'Noto Sans', sans-serif;
}
.portal {
  display: flex;
  height: 100%;
}
.veil {
  position: absolute;
  inset: 0;
  backdrop-filter: blur(2px);
}

/* Sidebar */
.sidebar {
  width: 338px;
  flex: none;
  display: flex;
  flex-direction: column;
}
.brand {
  height: 128px;
  flex: none;
  display: flex;
  justify-content: center;
  padding-top: 4px;
  background: #93a1ab;
}
.menu {
  flex: 1;
  background: linear-gradient(150deg, #0b4161, #0f5474 50%, #126a92);
  color: #9fb8c6;
}
.menu-title {
  height: 44px;
  padding-left: 22px;
  font-weight: 600;
  font-size: 14px;
  line-height: 44px;
}
.menu-item {
  height: 51px;
  display: flex;
  align-items: center;
  gap: 13px;
  padding: 0 31px 0 28px;
}
.chev {
  margin-left: auto;
}
.menu .active {
  color: #0b6cab;
}
.submenu {
  height: 253px;
  display: grid;
  grid-auto-rows: 1fr;
  align-items: center;
  padding-left: 63px;
}
.lang {
  display: flex;
  align-items: center;
  padding: 14px 45px 0;
  font-size: 13px;
}
.lang-box {
  position: relative;
  width: 152px;
  margin-left: auto;
}
.lang-box select {
  width: 100%;
  height: 30px;
  padding: 0 0 0 50px;
  appearance: none;
  background: none;
  border: 1px solid #4487a8;
  border-radius: 15px;
  color: #5d96b4;
  font: inherit;
}
.lang-box svg {
  position: absolute;
  left: 92px;
  top: 13px;
}

/* Portal content */
.content {
  flex: 1;
  background: linear-gradient(#9ba8b0 95%, #95a2ac);
  color: #65727c;
}
.topbar {
  height: 92px;
  padding-left: 20px;
  background: #93a1aa;
}
.crumb {
  height: 50px;
  display: flex;
  align-items: center;
  gap: 20px;
}
.crumb h1 {
  font-size: 18px;
  font-weight: 500;
  color: #45617c;
}
.links {
  display: flex;
  align-items: center;
  gap: 20px;
  padding: 14px 0 0 7px;
}
.links i {
  width: 1px;
  height: 14px;
  background: #7c8993;
}
.card {
  margin: 30px 28px 0;
}
.card + .card {
  margin-top: 20px;
}
.cols {
  display: grid;
  grid-template-columns: 368px 1fr;
}
.head {
  height: 52px;
  background: #12688f;
  color: #a9c3cf;
}
.head.tall {
  height: 63px;
}
.head h2 {
  display: flex;
  align-items: center;
  height: 50px;
  padding: 0 14px;
  font-size: 17px;
  font-weight: 600;
}
.cols h2 + h2 {
  height: 52px;
  border-left: 1px solid #5a94b0;
}
.edit {
  width: 29px;
  height: 28px;
  margin-left: auto;
  padding: 5px;
  background: none;
  border: 1px solid #4487a8;
  border-radius: 4px;
}
.addr {
  height: 171px;
  padding-top: 15px;
}
address {
  display: flex;
  flex-direction: column;
  padding-left: 18px;
  font-style: normal;
  line-height: 27px;
}
.card b,
.step b {
  font-weight: 600;
  color: #4a555e;
}
.city {
  display: flex;
  gap: 4px;
  white-space: pre;
}
address a {
  text-decoration: underline;
}
.fold {
  height: 54px;
  display: flex;
  align-items: center;
  gap: 30px;
  padding: 0 12px 4px;
}
.fold p {
  line-height: 20px;
}
.fold b {
  display: block;
}
.totals {
  margin: 20px 28px 0;
  height: 99px;
  padding-top: 40px;
  border-top: 1px solid #8b98a1;
  font-size: 17px;
}
.totals span {
  padding-left: 18px;
}
.step {
  width: 156px;
  height: 46px;
  margin: 18px 0 0 252px;
  display: flex;
  align-items: center;
  justify-content: center;
  gap: 12px;
  border-radius: 23px;
  background: #92a8a9;
}

/* Shipment panel */
.panel {
  position: absolute;
  inset: 0 0 0 auto;
  width: 60.3%;
  display: flex;
  flex-direction: column;
  background: #fff;
  color: #4b5058;
}
.panel-main {
  flex: 1;
  min-height: 0;
  display: flex;
}
.scroller {
  flex: 1;
  overflow: hidden;
  padding: 0 18px 0 16px;
}
.panel b {
  font-weight: 700;
}
h3 {
  padding-top: 15px;
  font-size: 20px;
  line-height: 26px;
  font-weight: 500;
}
.jump {
  display: grid;
  grid-template-columns: 217px repeat(4, 1fr);
  margin-top: 16px;
}
.jump span {
  line-height: 54px;
}
.jump button {
  height: 56px;
  padding: 0 0 18px;
  border: 0;
  border-radius: 4px;
  background: none;
  color: inherit;
}
.jump button.on {
  background: #1f95c6;
  color: #fff;
  font-weight: 500;
}
.banner {
  height: 73px;
  display: flex;
  align-items: center;
  margin-top: 33px;
  padding: 0 22px 0 24px;
  border-radius: 6px;
  background: #eef1f6;
}
.kind {
  width: 155px;
  margin-left: 61px;
  padding-bottom: 3px;
  line-height: 22px;
}
.kind b {
  display: block;
  font-weight: 600;
}
.kind a {
  color: #f0592b;
}
.route {
  flex: 1;
  padding-top: 3px;
}
.ends {
  display: flex;
  align-items: center;
  gap: 9px;
  color: #111;
}
.ends span {
  padding-top: 6px;
}
.to {
  margin-left: auto;
}
.bars {
  display: flex;
  gap: 12px;
  margin: 12px 6px 0;
}
.bars i {
  flex: 1;
  height: 7px;
  background: #f45c2a;
}
table {
  width: 100%;
  margin-top: 54px;
  table-layout: fixed;
  border-collapse: collapse;
  border-top: 1px solid #eceef0;
}
.c1 {
  width: 427px;
}
.c2 {
  width: 303px;
}
.c3 {
  width: 88px;
}
th {
  height: 50px;
  padding: 0 14px 2px;
  text-align: left;
  font-weight: 600;
  border-bottom: 2px solid #eceef0;
}
td {
  height: 57px;
  padding: 12px 14px;
  vertical-align: top;
  line-height: 22px;
  border-bottom: 1px solid #eceef0;
}
.svc {
  display: flex;
  align-items: center;
  gap: 17px;
  padding: 3px 0 0 13px;
}
.svc.dhl {
  padding: 0 0 4px 13px;
}
.dhl .name {
  min-height: 44px;
}
.switch {
  position: relative;
  height: 25px;
}
.switch input {
  width: 60px;
  height: 25px;
  margin: 0;
  display: block;
  appearance: none;
  border-radius: 13px;
  background: radial-gradient(circle at 13px 12px, #fff 10px, #b4c4d8 11px, transparent 13px) #c3d6eb;
}
.switch input:checked {
  background: radial-gradient(circle at 47px 12px, #fff 10px, #1a8fbf 11px) #1f8fbf;
}
.switch span {
  position: absolute;
  left: 8px;
  top: 2px;
  font-size: 13px;
  color: #fff;
}
.name {
  max-width: 204px;
  font-size: 14px;
}

.scrollbar {
  width: 17px;
  display: flex;
  flex-direction: column;
  align-items: center;
  padding: 10px 0 8px;
  background: #fafafa;
}
.track {
  flex: 1;
  padding-top: 9px;
}
.thumb {
  width: 11px;
  height: 51%;
  border-radius: 6px;
  background: #8a8a8a;
}
.panel-foot {
  height: 146px;
  flex: none;
}
.note {
  display: block;
  padding-left: 28px;
  line-height: 22px;
  color: #2392b8;
}
.summary {
  display: flex;
  align-items: center;
  margin-top: 54px;
  padding: 0 12px 0 41px;
  line-height: 22px;
}
.summary b {
  display: block;
}
.sum {
  width: 107px;
  margin-left: auto;
}
.submit {
  width: 215px;
  height: 40px;
  display: flex;
  align-items: center;
  justify-content: space-between;
  padding: 0 15px;
  border: 0;
  border-radius: 4px;
  background: #1a7aa5;
  color: #fff;
  font-weight: 500;
}

/* Taskbar */
.taskbar {
  height: 59px;
  flex: none;
  display: flex;
  align-items: center;
  background: #f0f0f0;
}
.weather {
  width: 447px;
  display: flex;
  align-items: center;
  gap: 8px;
  padding: 0 0 3px 25px;
  line-height: 20px;
}
.weather span,
.clock span {
  display: block;
}
.weather span {
  color: #444;
}
.dock {
  display: flex;
  align-items: center;
}
.search {
  width: 274px;
  height: 40px;
  display: flex;
  align-items: center;
  gap: 10px;
  margin: 0 2px 0 17px;
  padding-left: 13px;
  border: 1px solid #e0e0e0;
  border-radius: 20px;
  background: #fbfbfb;
}
.search input {
  width: 180px;
  border: 0;
  outline: 0;
  background: none;
  font: inherit;
  font-size: 17px;
}
.search input::placeholder {
  color: #555;
}
.app {
  position: relative;
  width: 47px;
  height: 48px;
  margin: 0 4px;
  padding: 0 0 0 8px;
  border: 0;
  border-radius: 4px;
  background: none;
}
.app.here {
  background: #fafafa;
}
.app em {
  position: absolute;
  left: 24px;
  top: 2px;
  width: 20px;
  height: 20px;
  border-radius: 10px;
  background: #0f6fc0;
  color: #fff;
  font-size: 13px;
  font-style: normal;
  line-height: 20px;
}
.run::after {
  content: '';
  position: absolute;
  left: 20px;
  bottom: 0;
  width: 8px;
  height: 4px;
  border-radius: 2px;
  background: #8a8a8a;
}
.here::after {
  left: 14px;
  width: 20px;
  background: #1570c0;
}
.tray {
  display: flex;
  align-items: center;
  gap: 19px;
  margin-left: auto;
  padding: 0 25px 3px 0;
}
.net {
  display: flex;
  align-items: center;
  gap: 10px;
}
.clock {
  width: 70px;
  margin-right: -9px;
  text-align: right;
  line-height: 20px;
}
</style>
